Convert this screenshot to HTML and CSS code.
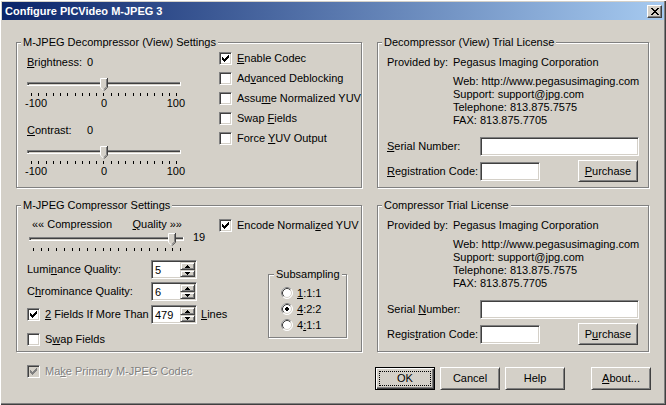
FILE: index.html
```html
<!DOCTYPE html>
<html lang="en">
<head>
  <meta charset="UTF-8">
  <title>Configure PICVideo M-JPEG 3</title>
  <link rel="stylesheet" href="styles.css">
</head>
<body>
  <div class="window">
    <div class="titlebar">
      <span class="caption">Configure PICVideo M-JPEG 3</span>
      <button class="close" aria-label="Close">
        <svg width="8" height="7" viewBox="0 0 8 7"><path d="M0 0h2v1H0zM6 0h2v1H6zM1 1h2v1H1zM5 1h2v1H5zM2 2h4v1H2zM3 3h2v1H3zM2 4h4v1H2zM1 5h2v1H1zM5 5h2v1H5zM0 6h2v1H0zM6 6h2v1H6z"/></svg>
      </button>
    </div>

    <div class="client">
      <div class="groups">

        <!-- decompressor settings -->
        <div class="group">
          <div class="group-title">M-JPEG Decompressor (View) Settings</div>
          <div class="dec-body">
            <div class="sliders">
              <div><span class="sname"><u>B</u>rightness:</span>0</div>
              <svg class="slider" width="158" height="21" viewBox="0 0 158 21">
                <rect x="0" y="6" width="154" height="4" fill="#fff"/>
                <rect x="0" y="6" width="153" height="3" fill="#808080"/>
                <rect x="1" y="7" width="152" height="2" fill="#404040"/>
                <rect x="2" y="8" width="151" height="1" fill="#D4D0C8"/>
                <path d="M4.5 17v3M11.5 17v3M19.5 17v3M26.5 17v3M33.5 17v3M40.5 17v3M48.5 17v3M55.5 17v3M62.5 17v3M69.5 17v3M76.5 17v3M84.5 17v3M91.5 17v3M98.5 17v3M106.5 17v3M113.5 17v3M120.5 17v3M127.5 17v3M135.5 17v3M142.5 17v3M149.5 17v3" stroke="#000"/>
                <g transform="translate(73 2)">
                  <path d="M0 0H8V9L4 13L0 9Z" fill="#D4D0C8"/>
                  <path d="M0.5 9V0.5H7" stroke="#fff" fill="none"/>
                  <path d="M0.5 9.2L4 12.7" stroke="#fff" fill="none"/>
                  <path d="M7.5 0V9.2L4 12.7" stroke="#404040" fill="none"/>
                  <path d="M6.5 1V8.8L4 11.3" stroke="#808080" fill="none"/>
                </g>
              </svg>
              <div class="scale"><span>-100</span><span>0</span><span>100</span></div>

              <div class="second"><span class="sname"><u>C</u>ontrast:</span>0</div>
              <svg class="slider" width="158" height="21" viewBox="0 0 158 21">
                <rect x="0" y="6" width="154" height="4" fill="#fff"/>
                <rect x="0" y="6" width="153" height="3" fill="#808080"/>
                <rect x="1" y="7" width="152" height="2" fill="#404040"/>
                <rect x="2" y="8" width="151" height="1" fill="#D4D0C8"/>
                <path d="M4.5 17v3M11.5 17v3M19.5 17v3M26.5 17v3M33.5 17v3M40.5 17v3M48.5 17v3M55.5 17v3M62.5 17v3M69.5 17v3M76.5 17v3M84.5 17v3M91.5 17v3M98.5 17v3M106.5 17v3M113.5 17v3M120.5 17v3M127.5 17v3M135.5 17v3M142.5 17v3M149.5 17v3" stroke="#000"/>
                <g transform="translate(73 2)">
                  <path d="M0 0H8V9L4 13L0 9Z" fill="#D4D0C8"/>
                  <path d="M0.5 9V0.5H7" stroke="#fff" fill="none"/>
                  <path d="M0.5 9.2L4 12.7" stroke="#fff" fill="none"/>
                  <path d="M7.5 0V9.2L4 12.7" stroke="#404040" fill="none"/>
                  <path d="M6.5 1V8.8L4 11.3" stroke="#808080" fill="none"/>
                </g>
              </svg>
              <div class="scale"><span>-100</span><span>0</span><span>100</span></div>
            </div>

            <div class="checks">
              <div class="check"><span class="box"><svg width="7" height="7" viewBox="0 0 7 7"><path d="M0 2h1v3H0zM1 3h1v3H1zM2 4h1v3H2zM3 3h1v3H3zM4 2h1v3H4zM5 1h1v3H5zM6 0h1v3H6z"/></svg></span><span><u>E</u>nable Codec</span></div>
              <div class="check"><span class="box"></span><span>Ad<u>v</u>anced Deblocking</span></div>
              <div class="check"><span class="box"></span><span>Assu<u>m</u>e Normalized YUV</span></div>
              <div class="check"><span class="box"></span><span>Swap <u>F</u>ields</span></div>
              <div class="check"><span class="box"></span><span>Force <u>Y</u>UV Output</span></div>
            </div>
          </div>
        </div>

        <!-- decompressor license -->
        <div class="group">
          <div class="group-title">Decompressor (View) Trial License</div>
          <div class="lic-body">
            <div class="provided"><span>Provided by:</span><span>Pegasus Imaging Corporation</span></div>
            <div class="contact">Web: http://www.pegasusimaging.com<br>Support: support@jpg.com<br>Telephone: 813.875.7575<br>FAX: 813.875.7705</div>
            <div class="serial-row"><span class="flabel"><u>S</u>erial Number:</span><input class="edit serial" type="text"></div>
            <div class="reg-row"><span class="flabel"><u>R</u>egistration Code:</span><input class="edit reg" type="text"><button class="btn purchase"><span><u>P</u>urchase</span></button></div>
          </div>
        </div>

        <!-- compressor settings -->
        <div class="group">
          <div class="group-title">M-JPEG Compressor Settings</div>
          <div class="comp-body">
            <div class="comp-slider">
              <div class="qlabels"><span>«« Compression</span><span><u>Q</u>uality »»</span></div>
              <div class="slider-line">
                <svg class="slider" width="160" height="21" viewBox="0 0 160 21">
                  <rect x="2" y="6" width="155" height="4" fill="#fff"/>
                  <rect x="2" y="6" width="154" height="3" fill="#808080"/>
                  <rect x="3" y="7" width="153" height="2" fill="#404040"/>
                  <rect x="4" y="8" width="152" height="1" fill="#D4D0C8"/>
                  <path d="M6.5 17v3M14.5 17v3M21.5 17v3M29.5 17v3M37.5 17v3M45.5 17v3M52.5 17v3M60.5 17v3M68.5 17v3M76.5 17v3M83.5 17v3M91.5 17v3M99.5 17v3M107.5 17v3M114.5 17v3M122.5 17v3M130.5 17v3M138.5 17v3M145.5 17v3M153.5 17v3" stroke="#000"/>
                  <g transform="translate(141 2)">
                    <path d="M0 0H8V9L4 13L0 9Z" fill="#D4D0C8"/>
                    <path d="M0.5 9V0.5H7" stroke="#fff" fill="none"/>
                    <path d="M0.5 9.2L4 12.7" stroke="#fff" fill="none"/>
                    <path d="M7.5 0V9.2L4 12.7" stroke="#404040" fill="none"/>
                    <path d="M6.5 1V8.8L4 11.3" stroke="#808080" fill="none"/>
                  </g>
                </svg>
                <span class="qval">19</span>
              </div>
            </div>

            <div class="encode">
              <div class="check"><span class="box"><svg width="7" height="7" viewBox="0 0 7 7"><path d="M0 2h1v3H0zM1 3h1v3H1zM2 4h1v3H2zM3 3h1v3H3zM4 2h1v3H4zM5 1h1v3H5zM6 0h1v3H6z"/></svg></span><span>Encode Normali<u>z</u>ed YUV</span></div>
            </div>

            <div class="spins">
              <div class="spin-row">
                <span class="spin-label">Lumi<u>n</u>ance Quality:</span>
                <div class="spin"><input type="text" value="5"><span class="spin-btns"><span class="up"><svg width="5" height="3" viewBox="0 0 5 3"><path d="M2 0h1v1h1v1h1v1H0V2h1V1h1z"/></svg></span><span class="down"><svg width="5" height="3" viewBox="0 0 5 3"><path d="M0 0h5v1H4v1H3v1H2V2H1V1H0z"/></svg></span></span></div>
              </div>
              <div class="spin-row chroma">
                <span class="spin-label">C<u>h</u>rominance Quality:</span>
                <div class="spin"><input type="text" value="6"><span class="spin-btns"><span class="up"><svg width="5" height="3" viewBox="0 0 5 3"><path d="M2 0h1v1h1v1h1v1H0V2h1V1h1z"/></svg></span><span class="down"><svg width="5" height="3" viewBox="0 0 5 3"><path d="M0 0h5v1H4v1H3v1H2V2H1V1H0z"/></svg></span></span></div>
              </div>
              <div class="spin-row fields">
                <span class="spin-label check"><span class="box"><svg width="7" height="7" viewBox="0 0 7 7"><path d="M0 2h1v3H0zM1 3h1v3H1zM2 4h1v3H2zM3 3h1v3H3zM4 2h1v3H4zM5 1h1v3H5zM6 0h1v3H6z"/></svg></span><span><u>2</u> Fields If More Than</span></span>
                <div class="spin"><input type="text" value="479"><span class="spin-btns"><span class="up"><svg width="5" height="3" viewBox="0 0 5 3"><path d="M2 0h1v1h1v1h1v1H0V2h1V1h1z"/></svg></span><span class="down"><svg width="5" height="3" viewBox="0 0 5 3"><path d="M0 0h5v1H4v1H3v1H2V2H1V1H0z"/></svg></span></span></div>
                <span class="lines"><u>L</u>ines</span>
              </div>
              <div class="check swap"><span class="box"></span><span>S<u>w</u>ap Fields</span></div>
            </div>

            <div class="group subsampling">
              <div class="group-title">Subsampling</div>
              <div class="radios">
                <div class="radio-row">
                  <svg class="radio" width="12" height="12" viewBox="0 0 12 12">
                    <circle cx="6" cy="6" r="5.5" fill="#fff" stroke="#fff"/>
                    <path d="M2.11 9.89A5.5 5.5 0 0 1 9.89 2.11" fill="none" stroke="#808080"/>
                    <circle cx="6" cy="6" r="4.5" fill="#fff" stroke="#D4D0C8"/>
                    <path d="M2.82 9.18A4.5 4.5 0 0 1 9.18 2.82" fill="none" stroke="#404040"/>
                  </svg><span><u>1</u>:1:1</span>
                </div>
                <div class="radio-row">
                  <svg class="radio" width="12" height="12" viewBox="0 0 12 12">
                    <circle cx="6" cy="6" r="5.5" fill="#fff" stroke="#fff"/>
                    <path d="M2.11 9.89A5.5 5.5 0 0 1 9.89 2.11" fill="none" stroke="#808080"/>
                    <circle cx="6" cy="6" r="4.5" fill="#fff" stroke="#D4D0C8"/>
                    <path d="M2.82 9.18A4.5 4.5 0 0 1 9.18 2.82" fill="none" stroke="#404040"/>
                    <path d="M5 4h2v1h1v2H7v1H5V7H4V5h1z" fill="#000"/>
                  </svg><span><u>4</u>:2:2</span>
                </div>
                <div class="radio-row">
                  <svg class="radio" width="12" height="12" viewBox="0 0 12 12">
                    <circle cx="6" cy="6" r="5.5" fill="#fff" stroke="#fff"/>
                    <path d="M2.11 9.89A5.5 5.5 0 0 1 9.89 2.11" fill="none" stroke="#808080"/>
                    <circle cx="6" cy="6" r="4.5" fill="#fff" stroke="#D4D0C8"/>
                    <path d="M2.82 9.18A4.5 4.5 0 0 1 9.18 2.82" fill="none" stroke="#404040"/>
                  </svg><span>4<u>:</u>1:1</span>
                </div>
              </div>
            </div>
          </div>
        </div>

        <!-- compressor license -->
        <div class="group">
          <div class="group-title">Compressor Trial License</div>
          <div class="lic-body">
            <div class="provided"><span>Provided by:</span><span>Pegasus Imaging Corporation</span></div>
            <div class="contact">Web: http://www.pegasusimaging.com<br>Support: support@jpg.com<br>Telephone: 813.875.7575<br>FAX: 813.875.7705</div>
            <div class="serial-row"><span class="flabel">Serial <u>N</u>umber:</span><input class="edit serial" type="text"></div>
            <div class="reg-row"><span class="flabel">Regis<u>t</u>ration Code:</span><input class="edit reg" type="text"><button class="btn purchase"><span>P<u>u</u>rchase</span></button></div>
          </div>
        </div>
      </div>

      <div class="bottom">
        <div class="check primary disabled"><span class="box"><svg width="7" height="7" viewBox="0 0 7 7"><path d="M0 2h1v3H0zM1 3h1v3H1zM2 4h1v3H2zM3 3h1v3H3zM4 2h1v3H4zM5 1h1v3H5zM6 0h1v3H6z"/></svg></span><span>Ma<u>k</u>e Primary M-JPEG Codec</span></div>
        <div class="buttons">
          <button class="btn default"><span class="focus">OK</span></button>
          <button class="btn">Cancel</button>
          <button class="btn">Help</button>
          <button class="btn about"><span><u>A</u>bout...</span></button>
        </div>
      </div>
    </div>
  </div>
</body>
</html>
```

FILE: styles.css
```css
* { box-sizing: border-box; }
html, body { margin: 0; padding: 0; }
body { width: 666px; height: 405px; overflow: hidden; background: #D4D0C8; color: #000;
  font-family: "Liberation Sans", Arial, sans-serif; font-size: 11px; line-height: 13px; }
u { text-underline-offset: 1px; }
svg { display: block; }

/* window frame + caption */
.window { width: 666px; height: 405px; padding: 2px; background: #D4D0C8;
  box-shadow: inset 1px 1px 0 #fff, inset -1px -1px 0 #404040, inset -2px -2px 0 #808080; }
.titlebar { height: 18px; display: flex; align-items: center; justify-content: space-between;
  padding: 0 2px 0 3px; background: linear-gradient(to right, #0A246A, #A6CAF0); }
.caption { color: #fff; font-weight: bold; }
.close { width: 15px; height: 13px; padding: 0; display: flex; align-items: center; justify-content: center;
  background: #D4D0C8; border: 1px solid; border-color: #fff #404040 #404040 #fff;
  box-shadow: inset -1px -1px 0 #808080; }

.client { padding: 22px 0 0 14px; }
.groups { display: grid; grid-template-columns: 346px 272px; grid-template-rows: 146px 147px;
  column-gap: 15px; row-gap: 17px; }

/* etched group box */
.group { border: 1px solid #808080; box-shadow: inset 1px 1px 0 #fff, 1px 1px 0 #fff; }
.group-title { width: max-content; margin: -7px 0 0 4px; padding: 0 2px; background: #D4D0C8; }

/* check boxes */
.check { display: flex; align-items: center; height: 20px; white-space: nowrap; }
.box { flex: none; width: 13px; height: 13px; margin-right: 5px; display: flex; align-items: center;
  justify-content: center; background: #fff; border: 1px solid; border-color: #808080 #fff #fff #808080;
  box-shadow: inset 1px 1px 0 #404040, inset -1px -1px 0 #D4D0C8; }
.disabled { color: #808080; text-shadow: 1px 1px 0 #fff; }
.disabled .box { background: #D4D0C8; }
.disabled .box svg { fill: #808080; }

/* decompressor settings */
.dec-body { display: flex; }
.sliders { width: 202px; padding: 7px 0 0 10px; }
.sname { display: inline-block; width: 60px; }
.slider { margin-top: 7px; }
.scale { display: grid; grid-template-columns: 76px 6px 78px; margin-left: -2px; }
.scale span:nth-child(2) { text-align: center; }
.scale span:last-child { text-align: right; }
.second { margin-top: 14px; }
.checks { margin-top: -1px; }

/* license boxes */
.lic-body { padding: 7px 0 0 9px; }
.provided { display: grid; grid-template-columns: 66px auto; }
.contact { margin: 6px 0 0 66px; }
.serial-row { display: flex; align-items: center; height: 19px; margin-top: 10px; }
.reg-row { display: flex; align-items: center; height: 22px; margin-top: 4px; }
.flabel { width: 93px; white-space: nowrap; }
.edit { height: 19px; padding: 0 3px; font: inherit; background: #fff; outline: none;
  border: 1px solid; border-color: #808080 #fff #fff #808080;
  box-shadow: inset 1px 1px 0 #404040, inset -1px -1px 0 #D4D0C8; }
.serial { width: 159px; }
.reg { width: 60px; }

/* push buttons */
.btn { width: 60px; height: 23px; padding: 0; display: flex; align-items: center; justify-content: center;
  font: inherit; color: #000; background: #D4D0C8; border: 1px solid; border-color: #fff #404040 #404040 #fff;
  box-shadow: inset 1px 1px 0 #D4D0C8, inset -1px -1px 0 #808080; }
.purchase { height: 22px; margin-left: 38px; }
.btn.default { padding: 3px; border-color: #000;
  box-shadow: inset 1px 1px 0 #fff, inset -1px -1px 0 #404040, inset -2px -2px 0 #808080; }
.focus { flex: 1; align-self: stretch; display: flex; align-items: center; justify-content: center;
  border: 1px dotted #000; }

/* compressor settings */
.comp-body { display: grid; grid-template-columns: 202px 49px 1fr; align-items: start; }
.comp-slider { grid-column: 1; grid-row: 1; padding-top: 6px; }
.qlabels { display: flex; justify-content: space-between; width: 150px; margin-left: 15px; }
.slider-line { display: flex; align-items: flex-start; }
.slider-line .slider { margin: 0 0 0 10px; }
.qval { margin-left: 6px; }
.encode { grid-column: 2 / 4; grid-row: 1; margin-top: 3px; }
.spins { grid-column: 1 / 3; grid-row: 2; padding-left: 10px; margin-top: 8px; }
.spin-row { display: flex; align-items: center; height: 19px; }
.spin-row.chroma { margin-top: 3px; }
.spin-row.fields { margin-top: 4px; }
.spin-label { width: 124px; flex: none; }
.spin { display: flex; width: 46px; height: 19px; padding: 1px; background: #fff;
  border: 1px solid; border-color: #808080 #fff #fff #808080;
  box-shadow: inset 1px 1px 0 #404040, inset -1px -1px 0 #D4D0C8; }
.spin input { flex: 1; min-width: 0; height: 15px; padding: 0 0 0 2px; border: 0; font: inherit;
  background: transparent; outline: none; }
.spin-btns { width: 15px; display: flex; flex-direction: column; }
.spin-btns span { display: flex; align-items: center; justify-content: center; background: #D4D0C8;
  border: 1px solid; border-color: #D4D0C8 #404040 #404040 #D4D0C8;
  box-shadow: inset 1px 1px 0 #fff, inset -1px -1px 0 #808080; }
.spin-btns .up { height: 8px; }
.spin-btns .down { height: 7px; }
.lines { margin-left: 4px; }
.swap { margin-top: 5px; }

.subsampling { grid-column: 3; grid-row: 2; width: 79px; height: 64px; margin-top: 22px; }
.subsampling .group-title { margin-left: 5px; }
.radios { padding: 4px 0 0 12px; }
.radio-row { display: flex; align-items: center; height: 16px; }
.radio { margin-right: 4px; }

/* bottom row */
.bottom { display: grid; grid-template-columns: 346px 1fr; column-gap: 15px; align-items: start; }
.primary { margin: 9px 0 0 11px; }
.buttons { display: flex; gap: 5px; margin: 15px 0 0 -2px; }
.about { margin-left: 21px; }
```
